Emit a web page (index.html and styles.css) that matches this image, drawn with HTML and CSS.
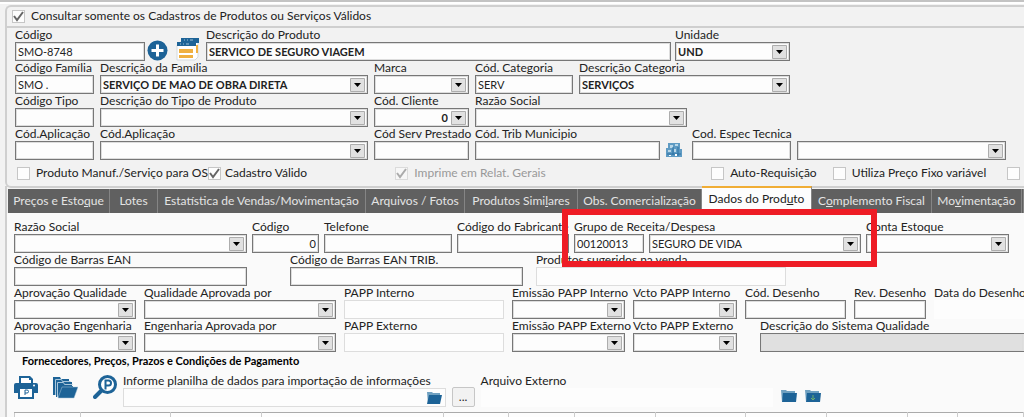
FILE: index.html
```html
<!DOCTYPE html>
<html lang="pt-BR">
<head>
  <meta charset="UTF-8">
  <meta name="viewport" content="width=device-width, initial-scale=1.0">
  <title>Cadastro de Produtos</title>
  <link rel="stylesheet" href="styles.css">
</head>
<body>
  <form class="window">
    <section class="product">
      <div class="filter">
        <label class="check"><input type="checkbox" checked>Consultar somente os Cadastros de Produtos ou Serviços Válidos</label>
      </div>

      <div class="rows">
        <div class="row row-code">
          <div class="code">
            <div class="field">
              <label for="codigo">Código</label>
              <input id="codigo" type="text" value="SMO-8748">
            </div>
            <button class="icon-button" type="button" aria-label="Adicionar">
              <svg width="21" height="21" viewBox="0 0 21 21">
                <circle cx="10.5" cy="10.5" r="10" fill="#1d6397"/>
                <path d="M10.5 4.5v12M4.5 10.5h12" stroke="#fff" stroke-width="3"/>
              </svg>
            </button>
            <button class="icon-button" type="button" aria-label="Consultar">
              <svg width="24" height="24" viewBox="0 0 24 24">
                <path d="M7 3h15v17l-3 3H1V8z" fill="#fff" stroke="#d5dadd"/>
                <path d="M5 1h18v5h-3v3H1V5h4z" fill="#1d6397"/>
                <path d="M8 3h1M11 3h1M14 3h3M4 7h1M7 7h1M10 7h3" stroke="#9fc0d6"/>
                <path d="M3 12h14v4H3zM3 18h14v3H3zM20 8h2v8h-2z" fill="#f0b040"/>
              </svg>
            </button>
          </div>
          <div class="field">
            <label for="descricao">Descrição do Produto</label>
            <input id="descricao" class="strong" type="text" value="SERVICO DE SEGURO VIAGEM">
          </div>
          <div class="field">
            <label for="unidade">Unidade</label>
            <select id="unidade" class="strong"><option>UND</option></select>
          </div>
        </div>

        <div class="row row-family">
          <div class="field">
            <label for="cod-familia">Código Família</label>
            <input id="cod-familia" type="text" value="SMO .">
          </div>
          <div class="field">
            <label for="familia">Descrição da Família</label>
            <select id="familia" class="strong"><option>SERVIÇO DE MAO DE OBRA DIRETA</option></select>
          </div>
          <div class="field">
            <label for="marca">Marca</label>
            <select id="marca"><option></option></select>
          </div>
          <div class="field">
            <label for="cod-categoria">Cód. Categoria</label>
            <input id="cod-categoria" type="text" value="SERV">
          </div>
          <div class="field">
            <label for="categoria">Descrição Categoria</label>
            <select id="categoria" class="strong"><option>SERVIÇOS</option></select>
          </div>
        </div>

        <div class="row row-type">
          <div class="field">
            <label for="cod-tipo">Código Tipo</label>
            <input id="cod-tipo" type="text">
          </div>
          <div class="field">
            <label for="tipo">Descrição do Tipo de Produto</label>
            <select id="tipo"><option></option></select>
          </div>
          <div class="field">
            <label for="cliente">Cód. Cliente</label>
            <select id="cliente" class="strong number"><option>0</option></select>
          </div>
          <div class="field">
            <label for="razao">Razão Social</label>
            <select id="razao"><option></option></select>
          </div>
        </div>

        <div class="row row-application">
          <div class="field">
            <label for="cod-aplicacao">Cód.Aplicação</label>
            <input id="cod-aplicacao" type="text">
          </div>
          <div class="field">
            <label for="aplicacao">Cód.Aplicação</label>
            <select id="aplicacao"><option></option></select>
          </div>
          <div class="field">
            <label for="servico">Cód Serv Prestado</label>
            <input id="servico" type="text">
          </div>
          <div class="field">
            <label for="municipio">Cód. Trib Municipio</label>
            <input id="municipio" type="text">
          </div>
          <button class="icon-button city" type="button" aria-label="Buscar município">
            <svg width="16" height="16" viewBox="0 0 16 16">
              <path d="M2 1h12v6h2v8H0V6h2z" fill="#5f9bc3"/>
              <path d="M4 3h3v3H4zM9 2h3v2H9zM2 8h3v2H2zM8 7h2v3H8z" fill="#b9d7e8"/>
              <path d="M1 12h14M7 5v8M12 5v9" stroke="#2c71a3"/>
              <path d="M3 13h2v1H3zM9 12h2v2H9z" fill="#fff"/>
            </svg>
          </button>
          <div class="field">
            <label for="cod-espec">Cod. Espec Tecnica</label>
            <input id="cod-espec" type="text">
          </div>
          <div class="field">
            <select aria-label="Espec Tecnica"><option></option></select>
          </div>
        </div>
      </div>

      <div class="flags">
        <label class="check"><input type="checkbox">Produto Manuf./Serviço para OS</label>
        <label class="check"><input type="checkbox" checked>Cadastro Válido</label>
        <label class="check"><input type="checkbox" checked disabled>Imprime em Relat. Gerais</label>
        <label class="check"><input type="checkbox">Auto-Requisição</label>
        <label class="check"><input type="checkbox">Utiliza Preço Fixo variável</label>
        <input type="checkbox" aria-label="Opção">
      </div>
    </section>

    <nav class="tabs">
      <button type="button">Preços e Esto<u>q</u>ue</button>
      <button type="button">Lotes</button>
      <button type="button">Estatística de Vendas/Movimentação</button>
      <button type="button">Arquivos / Fotos</button>
      <button type="button">Produtos Simi<u>l</u>ares</button>
      <button type="button">Obs. Comercialização</button>
      <button type="button" class="active">Dados do Prod<u>u</u>to</button>
      <button type="button">C<u>o</u>mplemento Fiscal</button>
      <button type="button">Mo<u>v</u>imentação</button>
      <button type="button" aria-label="Mais"></button>
    </nav>

    <section class="details">
      <div class="row row-group">
        <div class="field">
          <label for="fornecedor">Razão Social</label>
          <select id="fornecedor"><option></option></select>
        </div>
        <div class="field">
          <label for="cod-fornecedor">Código</label>
          <input id="cod-fornecedor" class="number" type="text" value="0">
        </div>
        <div class="field">
          <label for="telefone">Telefone</label>
          <input id="telefone" type="text">
        </div>
        <div class="field">
          <label for="fabricante">Código do Fabricante</label>
          <input id="fabricante" type="text">
        </div>
        <div class="revenue">
          <div class="field">
            <label for="grupo">Grupo de Receita/Despesa</label>
            <input id="grupo" type="text" value="00120013">
          </div>
          <div class="field">
            <select aria-label="Receita/Despesa"><option>SEGURO DE VIDA</option></select>
          </div>
          <div class="highlight"></div>
        </div>
        <div class="field">
          <label for="conta">Conta Estoque</label>
          <select id="conta"><option></option></select>
        </div>
      </div>

      <div class="row row-barcode">
        <div class="field">
          <label for="ean">Código de Barras EAN</label>
          <input id="ean" type="text">
        </div>
        <div class="field">
          <label for="ean-trib">Código de Barras EAN TRIB.</label>
          <input id="ean-trib" type="text">
        </div>
        <div class="field">
          <label for="sugeridos">Produtos sugeridos na venda</label>
          <input id="sugeridos" class="light" type="text">
        </div>
      </div>

      <div class="row row-quality">
        <div class="field">
          <label for="qualidade">Aprovação Qualidade</label>
          <select id="qualidade"><option></option></select>
        </div>
        <div class="field">
          <label for="qualidade-por">Qualidade Aprovada por</label>
          <select id="qualidade-por"><option></option></select>
        </div>
        <div class="field">
          <label for="papp-int">PAPP Interno</label>
          <input id="papp-int" class="light" type="text">
        </div>
        <div class="field">
          <label for="emissao-int">Emissão PAPP Interno</label>
          <select id="emissao-int"><option></option></select>
        </div>
        <div class="field">
          <label for="vcto-int">Vcto PAPP Interno</label>
          <select id="vcto-int"><option></option></select>
        </div>
        <div class="field">
          <label for="cod-desenho">Cód. Desenho</label>
          <input id="cod-desenho" type="text">
        </div>
        <div class="field">
          <label for="rev-desenho">Rev. Desenho</label>
          <input id="rev-desenho" type="text">
        </div>
        <div class="field">
          <label for="data-desenho">Data do Desenho</label>
          <input id="data-desenho" class="plain" type="text">
        </div>
      </div>

      <div class="row row-engineering">
        <div class="field">
          <label for="engenharia">Aprovação Engenharia</label>
          <select id="engenharia"><option></option></select>
        </div>
        <div class="field">
          <label for="engenharia-por">Engenharia Aprovada por</label>
          <select id="engenharia-por"><option></option></select>
        </div>
        <div class="field">
          <label for="papp-ext">PAPP Externo</label>
          <input id="papp-ext" class="light" type="text">
        </div>
        <div class="field">
          <label for="emissao-ext">Emissão PAPP Externo</label>
          <select id="emissao-ext"><option></option></select>
        </div>
        <div class="field">
          <label for="vcto-ext">Vcto PAPP Externo</label>
          <select id="vcto-ext"><option></option></select>
        </div>
        <div class="field system">
          <label for="sistema">Descrição do Sistema Qualidade</label>
          <input id="sistema" type="text" disabled>
        </div>
      </div>

      <h2>Fornecedores, Preços, Prazos e Condições de Pagamento</h2>

      <div class="import">
        <div class="tools">
          <button class="icon-button" type="button" aria-label="Imprimir">
            <svg width="24" height="24" viewBox="0 0 24 24">
              <path d="M5 1h11l3 3v4H5z" fill="#1d6397"/>
              <path d="M7 3h8v2h2v3H7z" fill="#fff"/>
              <path d="M2 8h20q2 0 2 2v8h-4v-5H4v5H0v-8q0-2 2-2z" fill="#1d6397"/>
              <path d="M5 13h14v10H5z" fill="#fff" stroke="#1d6397" stroke-width="2"/>
              <path d="M11 20v-5h2q1.500 0 1.500 1.500T13 18h-2" fill="none" stroke="#1d6397"/>
              <circle cx="20" cy="10.500" r="1" fill="#fff"/>
            </svg>
          </button>
          <button class="icon-button" type="button" aria-label="Abrir pastas">
            <svg width="25" height="24" viewBox="0 0 25 24">
              <path d="M0 2h7l1 2h8v3h3v4H9L4 22H3v-2H0z" fill="#1d6397"/>
              <path d="M2.500 20V4.500h6l1 2h8M4.500 21V7.500h6l1 2h8" fill="none" stroke="#a9c7db"/>
              <path d="M5 9h5l1 2h9v2H10L6 22H5z" fill="#1d6397"/>
              <path d="M9 12h16l-4 11H5z" fill="#1d6397" stroke="#a9c7db" stroke-width=".5"/>
            </svg>
          </button>
          <button class="icon-button" type="button" aria-label="Pesquisar">
            <svg width="24" height="24" viewBox="0 0 24 24">
              <circle cx="14.500" cy="9.500" r="8" fill="#fff" stroke="#1d6397" stroke-width="3"/>
              <path d="M8 16l-6 6" stroke="#1d6397" stroke-width="4" stroke-linecap="round"/>
              <path d="M12.500 14.500V5.500h3q2.500 0 2.500 2.500t-2.500 2.500h-3" fill="none" stroke="#1d6397" stroke-width="2"/>
            </svg>
          </button>
        </div>
        <div class="field sheet">
          <label for="planilha">Informe planilha de dados para importação de informações</label>
          <div class="file">
            <input id="planilha" class="light" type="text">
            <button class="icon-button" type="button" aria-label="Abrir planilha">
              <svg width="16" height="14" viewBox="0 0 16 14">
                <path d="M1 1h5l1 1h7v3H4L2 13z" fill="#6fa0c0"/>
                <path d="M3 4h13l-2 9H1z" fill="#1d6397"/>
              </svg>
            </button>
          </div>
        </div>
        <button class="more" type="button">...</button>
        <div class="field">
          <label for="arquivo">Arquivo Externo</label>
          <input id="arquivo" class="plain" type="text">
        </div>
        <div class="folders">
          <button class="icon-button" type="button" aria-label="Abrir arquivo">
            <svg width="16" height="14" viewBox="0 0 16 14">
              <path d="M0 1h5l1 1h8v3H3L1 13z" fill="#6fa0c0"/>
              <path d="M2 4h14l-1 9H1z" fill="#1d6397"/>
            </svg>
          </button>
          <button class="icon-button" type="button" aria-label="Baixar arquivo">
            <svg width="16" height="14" viewBox="0 0 16 14">
              <path d="M0 1h5l1 1h8v3H3L1 13z" fill="#6fa0c0"/>
              <path d="M2 4h14l-1 9H1z" fill="#1d6397"/>
              <path d="M8 6v5M6 9l2 2 2-2" fill="none" stroke="#6fae6a"/>
            </svg>
          </button>
        </div>
      </div>

      <table class="suppliers">
        <colgroup>
          <col class="w67"><col class="w92"><col class="w92"><col class="w181"><col class="w67"><col class="w67">
          <col class="w83"><col class="w92"><col class="w83"><col class="w83"><col class="w50"><col>
        </colgroup>
        <tr><th></th><th></th><th></th><th></th><th></th><th></th><th></th><th></th><th></th><th></th><th></th><th></th></tr>
      </table>
    </section>
  </form>
</body>
</html>
```

FILE: styles.css
```css
* {
  box-sizing: border-box;
}
body {
  margin: 0;
  font-family: Lato, "Open Sans", sans-serif;
  font-size: 12px;
  line-height: 14px;
  color: #222;
  background-color: #f2f2f2;
  overflow: hidden;
}
.window {
  border-top: 2px solid #c3c3c3;
  padding: 3px 0 0 5px;
  box-shadow: inset 0 2px #fff;
}
input, select, button {
  font: inherit;
  color: inherit;
  margin: 0;
}

/* upper panel */
.product {
  border: 2px solid #cfcfcf;
  border-right: none;
  border-radius: 6px 0 0 6px;
}
.filter {
  padding: 1px 0 2px 5px;
  border-bottom: 2px solid #cfcfcf;
}
.filter .check {
  height: 16px;
}
.rows {
  padding: 0 0 0 8px;
}
.row {
  display: grid;
  align-items: end;
  column-gap: 6px;
  height: 33px;
}
.row-code {
  grid-template-columns: 187fr 465fr 115fr 230fr;
  column-gap: 4px;
}
.row-family {
  grid-template-columns: 79fr 268fr 95fr 98fr 211fr 228fr;
}
.row-type {
  grid-template-columns: 79fr 268fr 95fr 212fr 331fr;
}
.row-application {
  grid-template-columns: 79fr 268fr 95fr 185fr 20fr 99fr 209fr 12fr;
}
.code {
  display: flex;
  align-items: flex-end;
}
.code .field {
  flex: 1;
}
.code .icon-button {
  margin-left: 2px;
}
.code .icon-button + .icon-button {
  margin: 0 2px 0 8px;
}
.field {
  display: flex;
  flex-direction: column;
  min-width: 0;
}
.field label {
  white-space: nowrap;
  height: 14px;
}
.field input, .field select {
  width: 100%;
  height: 19px;
  padding: 0 2px;
  border: 1px solid #777;
  border-radius: 0;
  outline: 1px solid #ddd;
  outline-offset: -2px;
  background-color: #fdfdfd;
  font-size: 11px;
}
.field select {
  appearance: none;
  padding-right: 20px;
  background-image: url("data:image/svg+xml,%3Csvg xmlns='http://www.w3.org/2000/svg' width='15' height='14'%3E%3Cpath d='M.5.5h14v13H.5z' fill='%23e1e1e1' stroke='%23adadad'/%3E%3Cpath d='M4 5h7L7.500 9z' fill='%23000'/%3E%3C/svg%3E");
  background-repeat: no-repeat;
  background-position: right 2px center;
}
.field .strong {
  font-weight: bold;
}
.field .number {
  text-align: right;
  text-align-last: right;
}
.field .light {
  border-color: #ddd;
  outline: none;
}
.field .plain {
  border-color: transparent;
  outline: none;
}
.icon-button {
  display: flex;
  padding: 0;
  border: none;
  background: none;
}
.city {
  padding-bottom: 2px;
}

/* check boxes */
.check {
  display: flex;
  align-items: center;
  gap: 6px;
  white-space: nowrap;
}
input[type="checkbox"] {
  appearance: none;
  flex: none;
  width: 13px;
  height: 13px;
  border: 1px solid #c6c6c6;
  background-color: #fdfdfd;
}
input[type="checkbox"]:checked {
  background-image: url("data:image/svg+xml,%3Csvg xmlns='http://www.w3.org/2000/svg' width='11' height='11'%3E%3Cpath d='M1 5l3 4 6-8' fill='none' stroke='%23666' stroke-width='2'/%3E%3C/svg%3E");
}
input[type="checkbox"]:disabled {
  opacity: 0.5;
}
.check:has(:disabled) {
  color: #999;
}
.flags {
  display: grid;
  grid-template-columns: 188fr 188fr 317fr 122fr 175fr 17fr;
  align-items: center;
  height: 26px;
  padding-left: 10px;
}
.flags .check:nth-child(2) {
  gap: 4px;
}

/* tabs */
.tabs {
  display: grid;
  grid-template-columns: 102fr 48fr 208fr 99fr 113fr 124fr 110fr 120fr 90fr 2fr;
  align-items: end;
  margin-top: -2px;
  padding-left: 1px;
  border-left: 2px solid #cfcfcf;
}
.tabs button {
  height: 24px;
  padding: 0;
  border: none;
  border-right: 1px solid #858585;
  background-color: #606060;
  color: #e4e4e4;
  white-space: nowrap;
}
.tabs .active {
  height: 27px;
  padding-bottom: 4px;
  border-top: 2px solid #f0ad35;
  background-color: #fdfdfd;
  color: #222;
}

/* lower panel */
.details {
  padding: 7px 0 0 7px;
  border-left: 2px solid #cfcfcf;
  background-color: #fafafa;
}
.row-group {
  grid-template-columns: 233fr 67fr 128fr 112fr 287fr 143fr 10fr;
  column-gap: 5px;
}
.revenue {
  position: relative;
  display: grid;
  grid-template-columns: 70fr 212fr;
  align-items: end;
  column-gap: 5px;
}
.highlight {
  position: absolute;
  inset: -11px -16px -14px -12px;
  border: 6px solid #ee1c25;
  pointer-events: none;
  z-index: 1;
}
.row-barcode {
  grid-template-columns: 233fr 33fr 233fr 3fr 250fr 233fr;
  column-gap: 5px;
}
.row-barcode .field:nth-child(2) {
  grid-column: 3;
}
.row-barcode .field:nth-child(3) {
  grid-column: 5;
}
.row-quality {
  grid-template-columns: 122fr 192fr 160fr 113fr 104fr 101fr 72fr 90fr;
  column-gap: 8px;
}
.row-engineering {
  grid-template-columns: 122fr 192fr 160fr 113fr 104fr 7fr 264fr;
  column-gap: 8px;
}
.system {
  grid-column: 7;
}
.field input:disabled {
  border-right: none;
  background-color: #e0e0e0;
}
.details h2 {
  margin: 0 0 5px 8px;
  font-size: 11px;
  line-height: 17px;
  color: #000;
}
.import {
  display: grid;
  grid-template-columns: 102fr 323fr 23fr 293fr 245fr;
  align-items: end;
  column-gap: 6px;
}
.tools {
  display: flex;
  gap: 15px;
  padding-bottom: 8px;
}
.file {
  display: flex;
  position: relative;
}
.file .icon-button {
  position: absolute;
  right: 4px;
  top: 3px;
}
.more {
  height: 20px;
  padding: 0;
  border: 1px solid #c6c6c6;
  border-radius: 2px;
  background-color: #f2f2f2;
}
.folders {
  display: flex;
  gap: 8px;
  padding: 0 0 4px 2px;
}
.suppliers {
  width: 100%;
  margin-top: 5px;
  border-collapse: collapse;
  table-layout: fixed;
}
.suppliers th {
  height: 8px;
  padding: 0;
  border: 1px solid #ccc;
  border-top-color: #aaa;
  background-color: #fdfdfd;
}
.w50 {
  width: 5%;
}
.w67 {
  width: 6.5%;
}
.w83 {
  width: 8%;
}
.w92 {
  width: 9%;
}
.w181 {
  width: 18%;
}
```
